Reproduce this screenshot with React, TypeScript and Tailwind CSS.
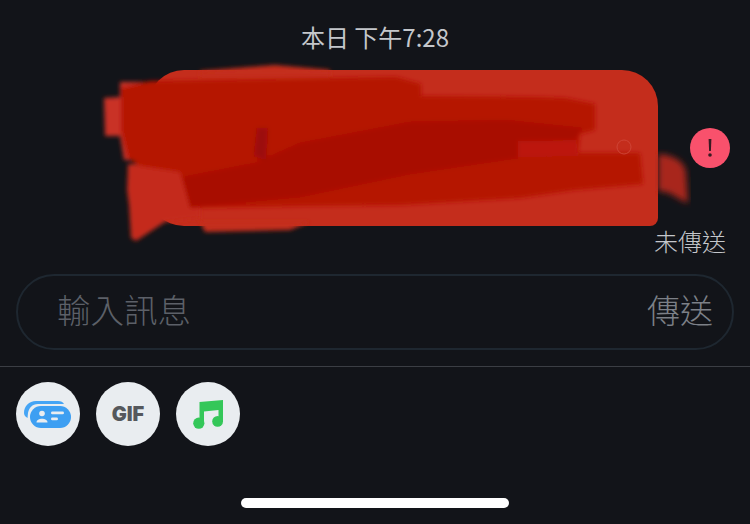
import React from 'react';

const cjk = 'font-["Noto_Sans_CJK_TC","Noto_Sans",sans-serif]';

// the hand-drawn red scribble that hides the message text
function Scribble() {
    return (
        <svg className="absolute left-0 top-0 pointer-events-none" width="750" height="260" viewBox="0 0 750 260">
            <defs>
                <filter id="soft" x="-10%" y="-10%" width="120%" height="120%">
                    <feGaussianBlur stdDeviation="2" />
                </filter>
                <filter id="softer" x="-10%" y="-10%" width="120%" height="120%">
                    <feGaussianBlur stdDeviation="3" />
                </filter>
            </defs>
            <g filter="url(#soft)">
                {/* light strokes sticking out of the bubble */}
                <path d="M200 71 L262 66 L275 65 L330 70 L330 76 L200 76Z" fill="#c42d1c" />
                <path d="M104 98 L120 97 L120 82 L150 82 L170 120 L150 161 L124 160 L120 136 L105 136Z" fill="#c93026" />
                <path d="M128 164 L200 165 L200 218 L165 222 L136 241 L131 238 L129 205 L127 190Z" fill="#c42c1c" />
                <path d="M200 222 L310 222 L290 230 L205 232Z" fill="#c42d1c" />
                {/* mid red */}
                <path d="M121 88 L150 81 L396 77 L421 84 L421 96 L535 97 L565 98 L595 104 L595 130 L580 134 L578 153 L640 153 L643 184 L575 190 L520 198 L400 205 L300 206 L190 208 L180 172 L140 166 L128 158 L121 130Z" fill="#b51206" />
                {/* darker core */}
                <path d="M183 177 L255 163 L300 143 L410 122 L505 120 L582 128 L572 144 L518 144 L518 158 L410 174 L300 197 L190 207Z" fill="#a80a02" />
                <path d="M254 156 L257 128 L268 128 L266 160Z" fill="#9c0f08" />
                {/* lighter patch on the right */}
                <path d="M518 141 L576 140 L578 156 L518 157Z" fill="#bc1809" />
            </g>
            <g filter="url(#softer)">
                <path d="M658 154 C672 155 684 160 686 172 L688 203 C678 200 672 191 658 191Z" fill="#a8261a" />
            </g>
            <circle cx="624" cy="147" r="7" fill="none" stroke="#cf4436" strokeWidth="1" />
        </svg>
    );
}

export default function App() {
    return (
        <div className={`w-[750px] h-[524px] bg-[#121419] flex flex-col overflow-hidden relative ${cjk}`}>
            <div className="h-[70px] flex justify-center items-center pt-[4px] text-[24px] leading-none text-[#c4c7cb]">
                本日 下午7:28
            </div>

            {/* message row */}
            <div className="flex flex-col">
                <div className="flex items-center h-[156px]">
                    <div className="ml-[148px] w-[510px] h-[156px] bg-[#c42d1c] rounded-t-[36px] rounded-bl-[36px] rounded-br-[8px]" />
                    <div className="ml-[32px] w-[40px] h-[40px] rounded-full bg-[#f9516c] flex items-center justify-center">
                        <svg width="8" height="24" viewBox="0 0 8 24">
                            <path d="M2.6 3 H5.4 L4.9 15 H3.1Z" fill="#3a1a22" />
                            <circle cx="4" cy="19" r="1.8" fill="#3a1a22" />
                        </svg>
                    </div>
                </div>
                <div className="h-[48px] flex justify-end items-start pr-[24px] text-[24px] leading-[30px] font-light text-[#c4c7cb]">
                    未傳送
                </div>
            </div>

            <Scribble />

            {/* input */}
            <div className="mx-[16px] h-[76px] rounded-[38px] border-2 border-[#1e2730] flex items-center justify-between pl-[39px] pr-[19px] pb-[5px]">
                <span className="text-[33.5px] font-light text-[#5c6068]">輸入訊息</span>
                <span className="text-[33px] font-light text-[#7c8087]">傳送</span>
            </div>

            <div className="mt-[16px] h-px bg-[#3b3e44]" />

            {/* attachments */}
            <div className="mt-[15px] pl-[16px] flex gap-[16px]">
                <div className="w-[64px] h-[64px] rounded-full bg-[#e9edf0] flex items-center justify-center">
                    <svg width="48" height="27" viewBox="0 0 48 27">
                        <path d="M0 12 C0 5 5 0 12 0 H34 C37 0 39 1 40 3 H14 C8 3 5 7 4 12 L3.5 17 C1.5 16 0 14 0 12Z" fill="#45a5f5" />
                        <rect x="6" y="5" width="41" height="22" rx="11" fill="#3d9ff2" />
                        <circle cx="18" cy="12.5" r="2.8" fill="#e9edf0" />
                        <path d="M12.5 21.5 C12.5 16.5 23.5 16.5 23.5 21.5Z" fill="#e9edf0" />
                        <rect x="27" y="10.5" width="13" height="2.8" rx="1.4" fill="#e9edf0" />
                        <rect x="27" y="16.5" width="7" height="2.8" rx="1.4" fill="#e9edf0" />
                    </svg>
                </div>
                <div className='w-[64px] h-[64px] rounded-full bg-[#e9edf0] flex items-center justify-center font-["Inter",sans-serif] font-black text-[20px] text-[#55585c]'>
                    GIF
                </div>
                <div className="w-[64px] h-[64px] rounded-full bg-[#e9edf0] flex items-center justify-center">
                    <svg width="30" height="29" viewBox="0 0 30 29">
                        <path d="M6.5 2 L30 0 V22 H25.5 V10 L11 11.5 V25 H6.5Z" fill="#34c759" />
                        <circle cx="5.8" cy="23.2" r="5.6" fill="#34c759" />
                        <circle cx="24.6" cy="21.4" r="5.4" fill="#34c759" />
                    </svg>
                </div>
            </div>

            {/* home indicator */}
            <div className="mt-[52px] mx-auto w-[268px] h-[10px] rounded-full bg-white" />
        </div>
    );
}
